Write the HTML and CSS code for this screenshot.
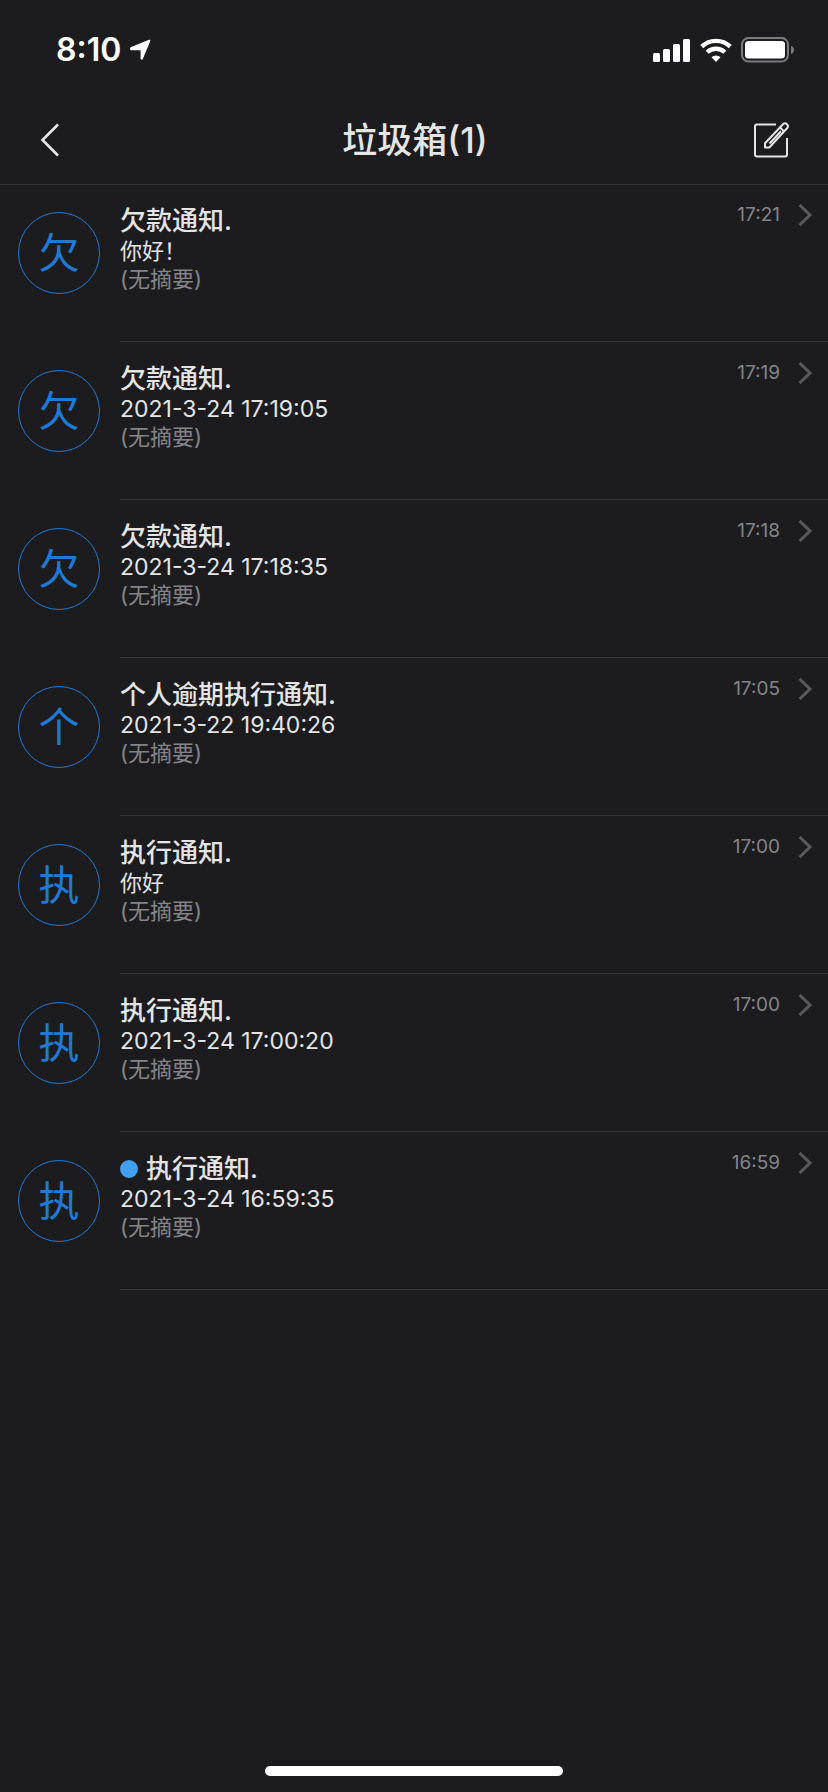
FILE: index.html
```html
<!DOCTYPE html>
<html lang="zh-CN">
<head>
<meta charset="utf-8">
<meta name="viewport" content="width=device-width, initial-scale=1">
<title>垃圾箱(1)</title>
<link rel="stylesheet" href="styles.css">
</head>
<body>
<div class="screen">
  <div class="status">
    <div class="status-left">
      <span class="clock">8:10</span>
      <svg class="location" width="22" height="22" viewBox="0 0 22 22" aria-hidden="true"><path d="M1.600 8.300 20 .7c.9-.3 1.700.4 1.300 1.400L13.800 20c-.5 1.200-2.200.9-2.200-.4v-8.400H2c-1.300 0-1.700-2.300-.4-2.900z" fill="#fff"/></svg>
    </div>
    <div class="status-right">
      <svg width="38" height="24" viewBox="0 0 38 24" aria-hidden="true"><g fill="#fff"><rect x="0" y="15" width="7" height="9" rx="1.500"/><rect x="10" y="11" width="7" height="13" rx="1.500"/><rect x="20" y="6" width="7" height="18" rx="1.500"/><rect x="30" y="1" width="7" height="23" rx="1.500"/></g></svg>
      <svg width="32" height="24" viewBox="0 0 32 24" aria-hidden="true"><g fill="none" stroke="#fff" stroke-width="4.300"><path d="M1.700 8.600a20.500 20.500 0 0 1 28.600 0"/><path d="M7.200 14.300a12.700 12.700 0 0 1 17.600 0"/></g><path d="M11.500 19.300a6.600 6.600 0 0 1 9 0L16 24z" fill="#fff"/></svg>
      <svg width="54" height="26" viewBox="0 0 54 26" aria-hidden="true"><rect x="1" y="1" width="46" height="23.500" rx="6.500" fill="none" stroke="#7b7b7d" stroke-width="2"/><rect x="4" y="4" width="40" height="17.500" rx="3.500" fill="#fff"/><path d="M50 8.700c4 1.300 4 6.900 0 8.200z" fill="#7b7b7d"/></svg>
    </div>
  </div>
  <header class="bar">
    <button class="icon-button" type="button" aria-label="返回"><svg width="20" height="34" viewBox="0 0 20 34" aria-hidden="true"><path d="M18 1.500 2.500 17 18 32.500" fill="none" stroke="#e5e5e6" stroke-width="2.600"/></svg></button>
    <h1 class="heading">垃圾箱(1)</h1>
    <button class="icon-button" type="button" aria-label="写邮件"><svg width="36" height="36" viewBox="0 0 36 36" fill="none" stroke="#e5e5e6" stroke-width="2" stroke-linejoin="round" aria-hidden="true"><path d="M22 2.500H3Q1 2.500 1 4.500V32.500Q1 34.500 3 34.500H31Q33 34.500 33 32.500V16"/><path d="M11 25.500v-4.300L29 2.200q2-2 4 0t0 4L15.300 25.500zM26 5.400l4.300 4.300M15.500 21.500 27 9.300"/></svg></button>
  </header>
  <main class="content">
    <ul class="list">
      <li><a class="row" href="#m1"><span class="avatar">欠</span><span class="body"><span class="text"><span class="sender">欠款通知.</span><span class="subject">你好！</span><span class="summary">(无摘要)</span></span><time class="time">17:21</time><svg class="chevron" width="14" height="22" viewBox="0 0 14 22" aria-hidden="true"><path d="M1.500 1 12 11 1.500 21"/></svg></span></a></li>
      <li><a class="row" href="#m2"><span class="avatar">欠</span><span class="body"><span class="text"><span class="sender">欠款通知.</span><span class="subject stamp">2021-3-24 17:19:05</span><span class="summary">(无摘要)</span></span><time class="time">17:19</time><svg class="chevron" width="14" height="22" viewBox="0 0 14 22" aria-hidden="true"><path d="M1.500 1 12 11 1.500 21"/></svg></span></a></li>
      <li><a class="row" href="#m3"><span class="avatar">欠</span><span class="body"><span class="text"><span class="sender">欠款通知.</span><span class="subject stamp">2021-3-24 17:18:35</span><span class="summary">(无摘要)</span></span><time class="time">17:18</time><svg class="chevron" width="14" height="22" viewBox="0 0 14 22" aria-hidden="true"><path d="M1.500 1 12 11 1.500 21"/></svg></span></a></li>
      <li><a class="row" href="#m4"><span class="avatar">个</span><span class="body"><span class="text"><span class="sender">个人逾期执行通知.</span><span class="subject stamp">2021-3-22 19:40:26</span><span class="summary">(无摘要)</span></span><time class="time">17:05</time><svg class="chevron" width="14" height="22" viewBox="0 0 14 22" aria-hidden="true"><path d="M1.500 1 12 11 1.500 21"/></svg></span></a></li>
      <li><a class="row" href="#m5"><span class="avatar">执</span><span class="body"><span class="text"><span class="sender">执行通知.</span><span class="subject">你好</span><span class="summary">(无摘要)</span></span><time class="time">17:00</time><svg class="chevron" width="14" height="22" viewBox="0 0 14 22" aria-hidden="true"><path d="M1.500 1 12 11 1.500 21"/></svg></span></a></li>
      <li><a class="row" href="#m6"><span class="avatar">执</span><span class="body"><span class="text"><span class="sender">执行通知.</span><span class="subject stamp">2021-3-24 17:00:20</span><span class="summary">(无摘要)</span></span><time class="time">17:00</time><svg class="chevron" width="14" height="22" viewBox="0 0 14 22" aria-hidden="true"><path d="M1.500 1 12 11 1.500 21"/></svg></span></a></li>
      <li><a class="row" href="#m7"><span class="avatar">执</span><span class="body"><span class="text"><span class="sender"><span class="unread"></span>执行通知.</span><span class="subject stamp">2021-3-24 16:59:35</span><span class="summary">(无摘要)</span></span><time class="time">16:59</time><svg class="chevron" width="14" height="22" viewBox="0 0 14 22" aria-hidden="true"><path d="M1.500 1 12 11 1.500 21"/></svg></span></a></li>
    </ul>
  </main>
  <div class="home"></div>
</div>
</body>
</html>
```
FILE: styles.css
```css
* { box-sizing: border-box; }
body {
  margin: 0;
  background: #1c1c1e;
  color: #e5e5e6;
  font-family: Inter, "Noto Sans CJK SC", sans-serif;
}
.screen { min-height: 100vh; display: flex; flex-direction: column; }
.status {
  height: 96px;
  padding: 4px 33px 0 56px;
  display: flex;
  align-items: center;
  justify-content: space-between;
}
.status-left { display: flex; align-items: center; gap: 8px; }
.clock { color: #fff; font-size: 32px; font-weight: 600; line-height: 40px; }
.status-right { display: flex; align-items: center; gap: 9px; }
.bar {
  height: 88px;
  padding: 0 38px 0 40px;
  display: grid;
  grid-template-columns: 1fr auto 1fr;
  align-items: center;
  box-shadow: 0 1px 0 #363638;
}
.icon-button {
  display: flex;
  justify-self: start;
  padding: 0;
  border: 0;
  background: none;
}
.icon-button:last-child { justify-self: end; }
.heading { margin: 0; font-size: 35px; font-weight: 500; line-height: 48px; }
.content { flex: 1; }
.list { margin: 0; padding: 0; list-style: none; }
.row {
  display: flex;
  gap: 20px;
  padding-left: 18px;
  color: inherit;
  text-decoration: none;
}
.avatar {
  flex: none;
  width: 82px;
  height: 82px;
  margin-top: 28px;
  border: 1px solid #1f7ad6;
  border-radius: 50%;
  color: #1f7ad6;
  font-size: 41px;
  line-height: 80px;
  text-align: center;
}
.body {
  flex: 1;
  min-width: 0;
  display: flex;
  align-items: flex-start;
  padding: 20px 16px 48px 0;
  border-bottom: 1px solid #363638;
}
.text { flex: 1; min-width: 0; display: flex; flex-direction: column; }
.sender {
  display: flex;
  align-items: center;
  gap: 8px;
  font-size: 26px;
  font-weight: 500;
  line-height: 33px;
}
.unread { width: 18px; height: 18px; border-radius: 50%; background: #419ff0; }
.subject { font-size: 22px; line-height: 28px; }
.stamp { font-size: 23px; }
.summary { font-size: 22px; line-height: 28px; color: #848488; }
.time { margin-right: 18px; font-size: 19px; line-height: 22px; color: #848488; }
.chevron { flex: none; fill: none; stroke: #59595c; stroke-width: 3; }
.home {
  width: 36%;
  height: 10px;
  margin: 0 auto 16px;
  border-radius: 5px;
  background: #fff;
}
```
